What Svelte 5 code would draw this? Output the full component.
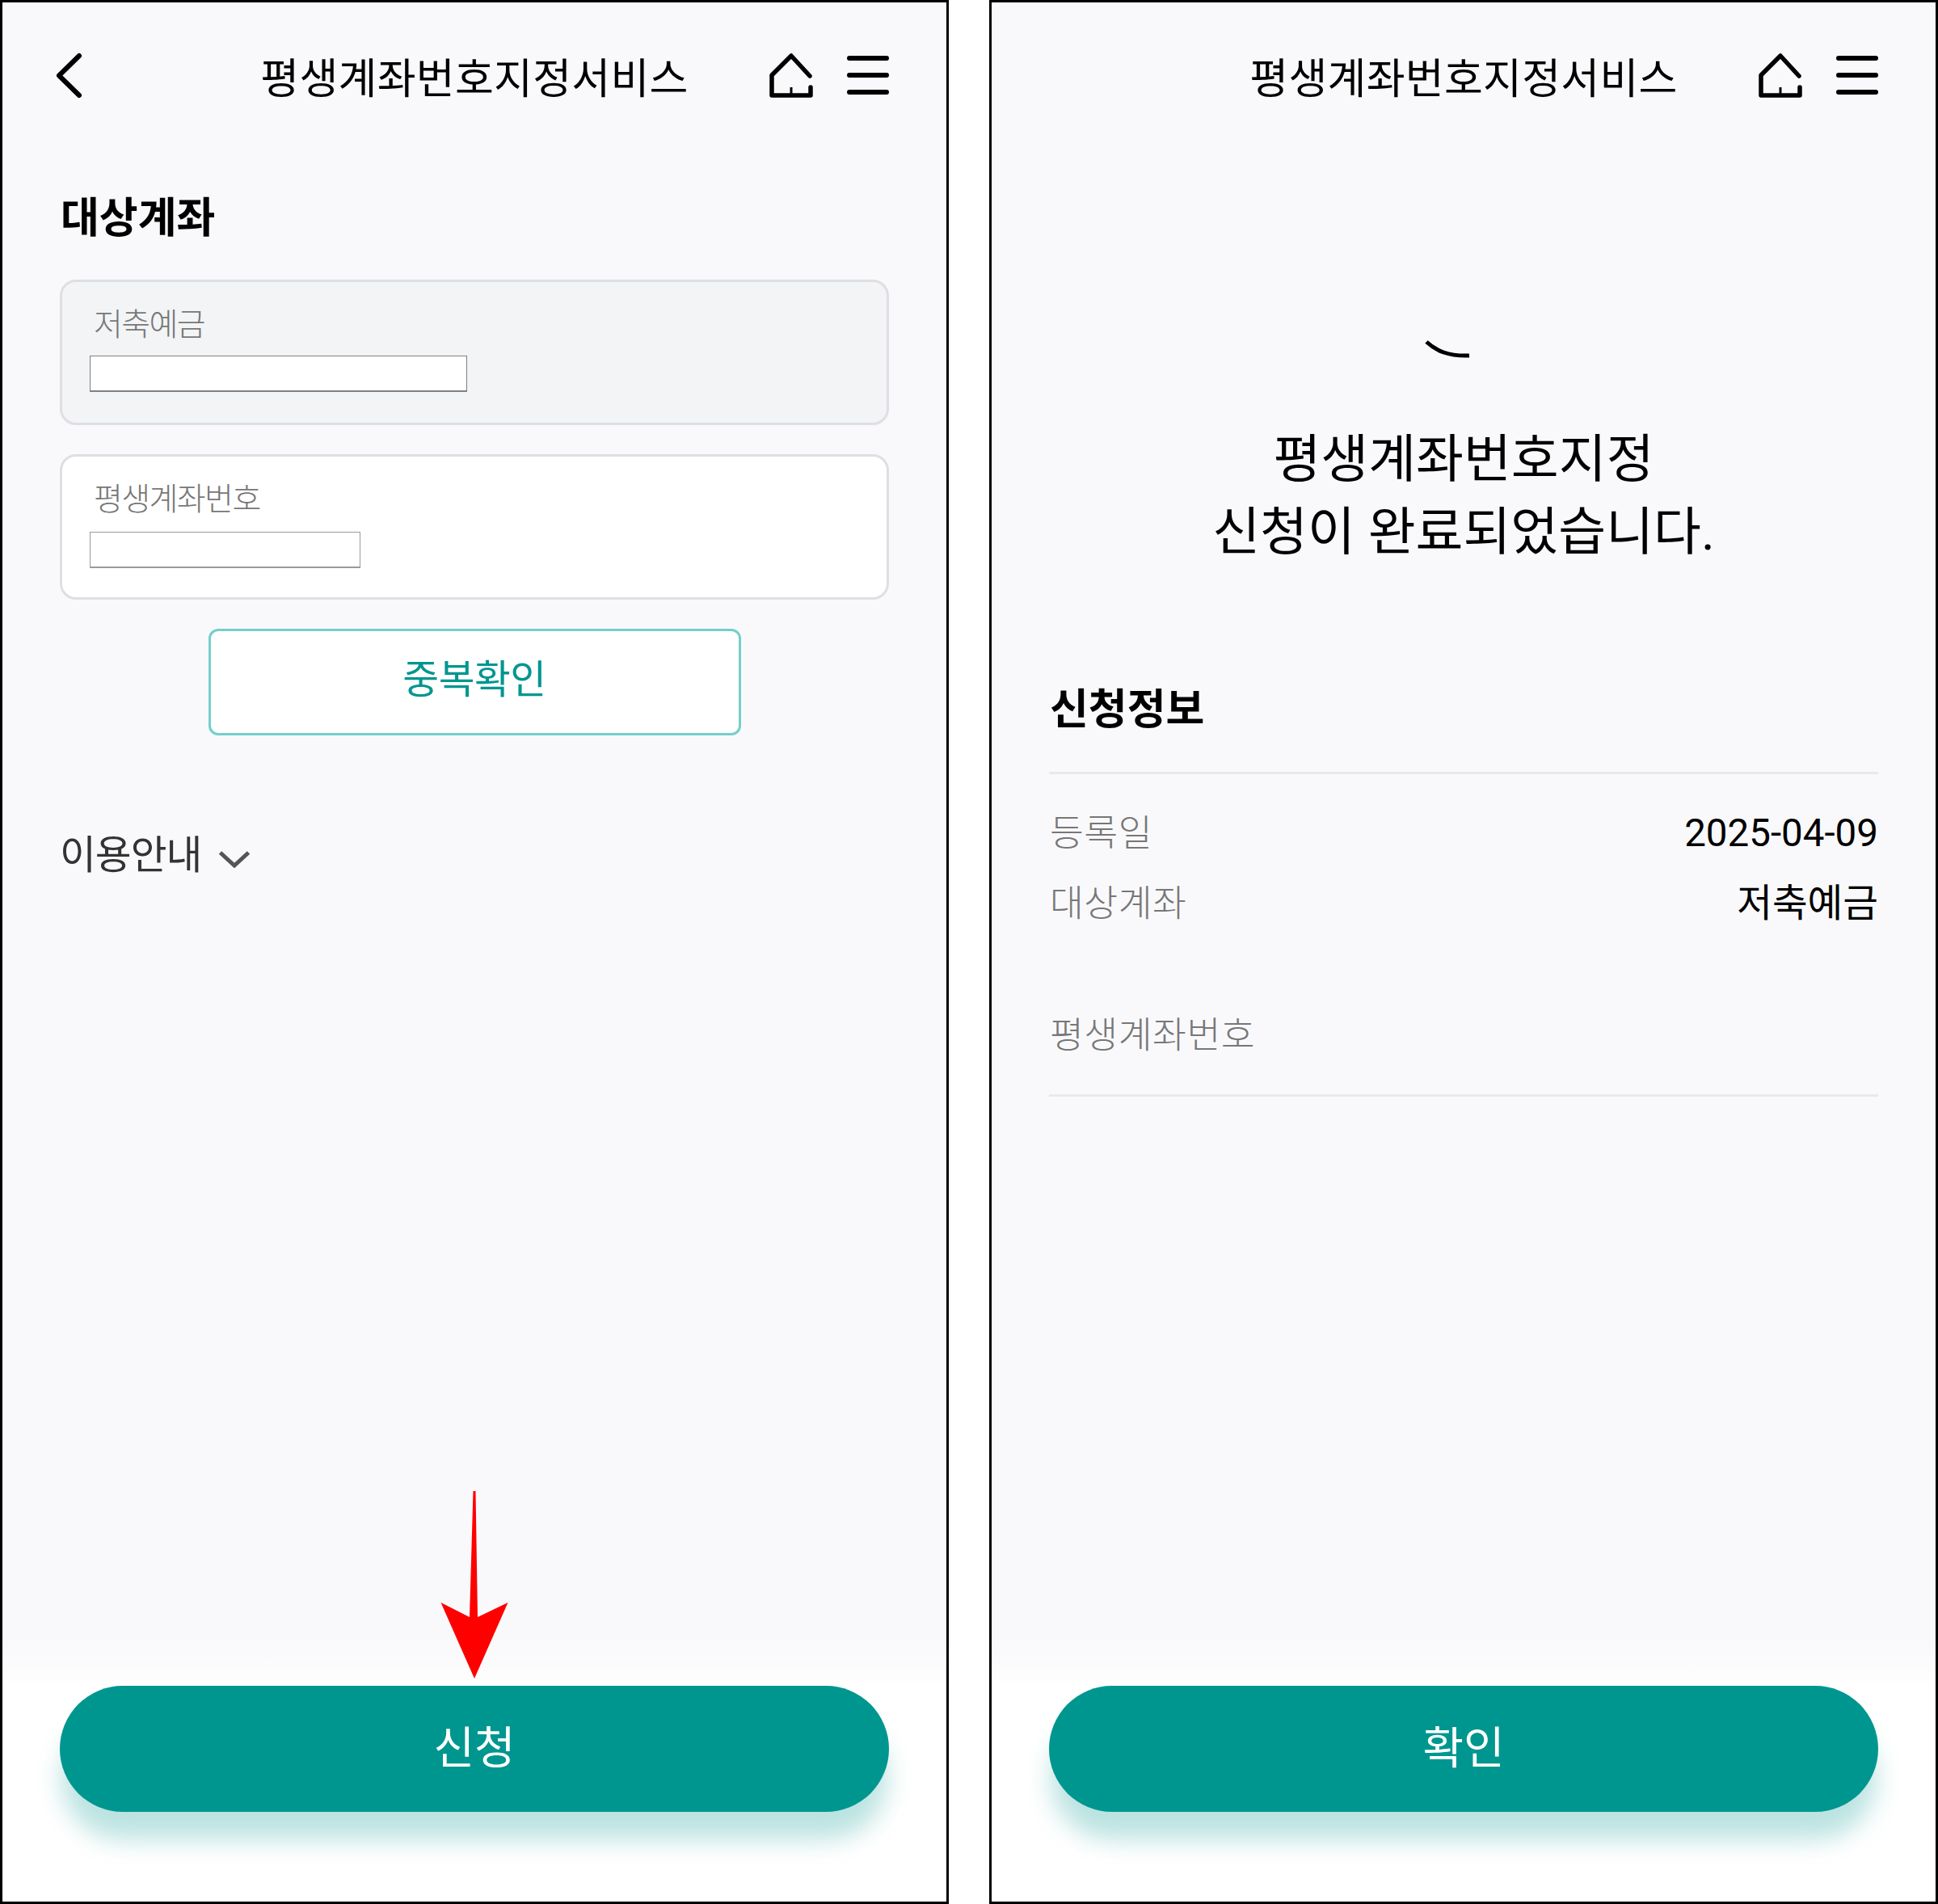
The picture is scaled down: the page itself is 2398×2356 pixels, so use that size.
<script>
  const details = [
    { label: "등록일", value: "2025-04-09", tall: false },
    { label: "대상계좌", value: "저축예금", tall: false },
    { label: "평생계좌번호", value: "", tall: true },
  ];
</script>

{#snippet header(showBack)}
  <header class="top">
    <div class="top-left">
      {#if showBack}
        <svg class="back" viewBox="0 0 36 60" width="36" height="60">
          <path d="M30 5 5 29.5 30 54" />
        </svg>
      {/if}
    </div>
    <h1>평생계좌번호지정서비스</h1>
    <div class="top-right">
      <svg class="home" viewBox="0 0 54 56" width="54" height="56">
        <path d="M50 29 27 4 3 28V53H51V43" />
        <path class="door" d="M27 43V53" />
      </svg>
      <svg class="menu" viewBox="0 0 52 48" width="52" height="48">
        <path d="M3 3H49M3 24H49M3 45H49" />
      </svg>
    </div>
  </header>
{/snippet}

{#snippet footer(label)}
  <footer class="bottom">
    <button class="cta">{label}</button>
  </footer>
{/snippet}

<main class="screens">
  <section class="phone">
    {@render header(true)}
    <div class="content">
      <h2 class="target-title">대상계좌</h2>
      <div class="field disabled">
        <span class="field-label">저축예금</span>
        <div class="mask wide"></div>
      </div>
      <div class="field">
        <span class="field-label">평생계좌번호</span>
        <div class="mask narrow"></div>
      </div>
      <button class="check">중복확인</button>
      <div class="guide">
        <span>이용안내</span>
        <svg viewBox="0 0 40 22" width="40" height="22">
          <path d="M2.5 3 20 19 37.5 3" />
        </svg>
      </div>
    </div>
    {@render footer("신청")}
    <svg class="arrow" viewBox="0 0 84 232" width="84" height="232">
      <path d="M40.5 0H43.5L46 156 83.5 138 42 232 0.5 138 36 156Z" />
    </svg>
  </section>

  <section class="phone">
    {@render header(false)}
    <div class="content">
      <div class="spinner">
        <svg viewBox="0 0 56 22" width="56" height="22">
          <path d="M2 2C14 13 29 20 55 19" />
        </svg>
      </div>
      <p class="done">평생계좌번호지정<br />신청이 완료되었습니다.</p>
      <h2 class="info-title">신청정보</h2>
      <dl class="info">
        {#each details as row}
          <div class="row" class:tall={row.tall}>
            <dt>{row.label}</dt>
            <dd>{row.value}</dd>
          </div>
        {/each}
      </dl>
    </div>
    {@render footer("확인")}
  </section>
</main>

<style>
  :global(body) {
    background: #fff;
    font-family: Roboto, "Noto Sans CJK KR", sans-serif;
  }
  .screens {
    display: flex;
    gap: 50px;
    width: 2398px;
    height: 2356px;
  }
  .phone {
    position: relative;
    flex: 0 0 1174px;
    box-sizing: border-box;
    display: flex;
    flex-direction: column;
    border: 3px solid #000;
    background: #f9f9fb;
  }
  .top {
    display: grid;
    grid-template-columns: 1fr auto 1fr;
    height: 58px;
    padding: 60px 71px 0;
  }
  .top-left,
  .top-right {
    display: flex;
    align-items: center;
    height: 60px;
  }
  .back {
    margin: 2px 0 0 -6px;
  }
  .top-right {
    justify-content: flex-end;
    gap: 42px;
  }
  h1 {
    margin: 0;
    padding-top: 6px;
    font-size: 52px;
    font-weight: 400;
    line-height: 60px;
    color: #000;
    letter-spacing: 0.28px;
  }
  svg {
    display: block;
    fill: none;
  }
  .back path {
    stroke: #000;
    stroke-width: 6;
    stroke-linecap: round;
    stroke-linejoin: round;
  }
  .home path {
    stroke: #000;
    stroke-width: 5.5;
    stroke-linecap: round;
    stroke-linejoin: round;
  }
  .home .door {
    stroke-width: 3;
    stroke-linecap: butt;
  }
  .menu path {
    stroke: #000;
    stroke-width: 6;
    stroke-linecap: round;
  }
  .content {
    flex: 1;
    display: flex;
    flex-direction: column;
    padding: 0 71px;
  }
  h2 {
    margin: 0;
    padding-left: 1px;
    font-size: 52px;
    font-weight: 700;
    line-height: 60px;
    color: #000;
  }
  .target-title {
    margin: 120px 0 45px;
  }
  .field {
    box-sizing: border-box;
    height: 180px;
    margin-bottom: 36px;
    padding: 30px 34px;
    border: 3px solid #dedee4;
    border-radius: 20px;
    background: #fff;
  }
  .field.disabled {
    background: #f3f4f6;
  }
  .field-label {
    display: block;
    height: 63px;
    padding-left: 5px;
    font-size: 39px;
    font-weight: 300;
    line-height: 46px;
    letter-spacing: -1.6px;
    color: #777;
  }
  .disabled .field-label {
    height: 61px;
  }
  .mask {
    box-sizing: border-box;
    height: 45px;
    border: 1px solid #9a9a9a;
    border-bottom-width: 2px;
    background: #fff;
  }
  .mask.wide {
    width: 467px;
    border-color: #808080;
  }
  .mask.narrow {
    width: 335px;
  }
  .check {
    align-self: center;
    box-sizing: border-box;
    width: 659px;
    height: 132px;
    padding: 0 0 15px;
    border: 3px solid #74cfcb;
    border-radius: 12px;
    background: #fff;
    color: #009690;
    font-family: inherit;
    font-size: 48.75px;
    font-weight: 400;
    letter-spacing: -0.5px;
  }
  .guide {
    display: flex;
    align-items: center;
    gap: 21px;
    margin-top: 120px;
    font-size: 48.75px;
    line-height: 58px;
    letter-spacing: -1px;
    color: #333;
  }
  .guide svg {
    margin-top: 7px;
  }
  .guide path {
    stroke: #555;
    stroke-width: 5;
  }
  .bottom {
    box-sizing: border-box;
    height: 318px;
    padding: 51px 71px 0;
    background: linear-gradient(#f9f9fb, #fdfdfe 44px, #fff 46px);
  }
  .cta {
    display: block;
    box-sizing: border-box;
    width: 100%;
    height: 156px;
    padding: 0 0 12px;
    border: 0;
    border-radius: 78px;
    background: #009690;
    box-shadow: 0 36px 30px -2px rgba(0, 150, 144, 0.27);
    color: #fff;
    font-family: inherit;
    font-size: 55px;
    font-weight: 400;
  }
  .arrow {
    position: absolute;
    left: 542px;
    top: 1842px;
  }
  .arrow path {
    fill: #f00;
  }
  .spinner {
    display: flex;
    justify-content: center;
    margin: 300px 40px 0 0;
  }
  .spinner path {
    stroke: #000;
    stroke-width: 5;
  }
  .done {
    margin: 81px 0 0;
    text-align: center;
    font-size: 64px;
    line-height: 90px;
    color: #000;
  }
  .info-title {
    margin-top: 145px;
    padding-bottom: 46px;
    border-bottom: 3px solid #e8e8ee;
  }
  .info {
    margin: 30px 0 0;
    padding-bottom: 29px;
    border-bottom: 3px solid #e8e8ee;
  }
  .row {
    display: flex;
    justify-content: space-between;
    align-items: baseline;
    height: 87px;
    line-height: 87px;
  }
  .row.tall {
    margin-top: 76px;
  }
  dt {
    padding-left: 1px;
    font-size: 45.5px;
    font-weight: 300;
    letter-spacing: 0.5px;
    color: #777;
  }
  dd {
    margin: 0;
    font-size: 47.5px;
    color: #000;
  }
</style>
